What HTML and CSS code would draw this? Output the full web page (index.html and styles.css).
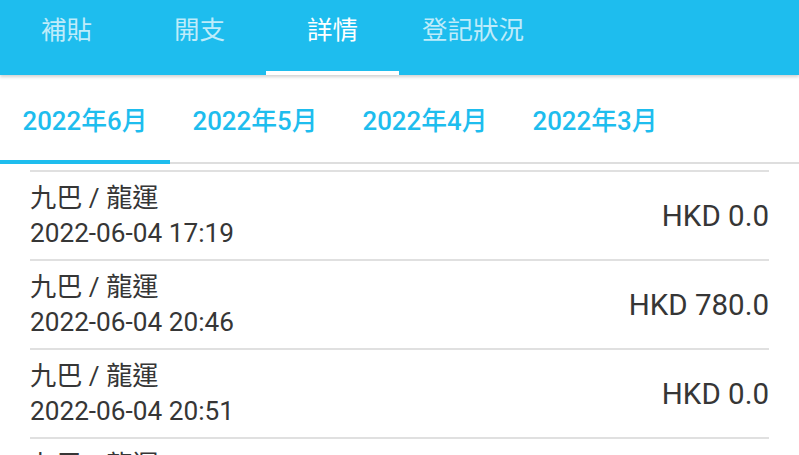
FILE: index.html
```html
<!DOCTYPE html>
<html lang="zh-Hant">
<head>
<meta charset="utf-8">
<link rel="stylesheet" href="styles.css">
</head>
<body>
<div class="app">
  <nav class="topbar">
    <div class="tab">補貼</div>
    <div class="tab">開支</div>
    <div class="tab active">詳情</div>
    <div class="tab wide">登記狀況</div>
  </nav>
  <nav class="months">
    <div class="month active">2022年6月</div>
    <div class="month">2022年5月</div>
    <div class="month">2022年4月</div>
    <div class="month">2022年3月</div>
  </nav>
  <ul class="list">
    <li class="row">
      <div class="info"><div class="title">九巴 / 龍運</div><div class="date">2022-06-04 17:19</div></div>
      <div class="amount">HKD 0.0</div>
    </li>
    <li class="row">
      <div class="info"><div class="title">九巴 / 龍運</div><div class="date">2022-06-04 20:46</div></div>
      <div class="amount">HKD 780.0</div>
    </li>
    <li class="row">
      <div class="info"><div class="title">九巴 / 龍運</div><div class="date">2022-06-04 20:51</div></div>
      <div class="amount">HKD 0.0</div>
    </li>
    <li class="row">
      <div class="info"><div class="title">九巴 / 龍運</div><div class="date">2022-06-04 21:02</div></div>
      <div class="amount">HKD 0.0</div>
    </li>
  </ul>
</div>
</body>
</html>
```
FILE: styles.css
```css
html, body {
  margin: 0;
  padding: 0;
  background: #ffffff;
  overflow: hidden;
}
body {
  width: 799px;
  height: 455px;
  font-family: Roboto, "Noto Sans CJK TC", "Noto Sans", sans-serif;
}
.app {
  display: flex;
  flex-direction: column;
  height: 455px;
  overflow: hidden;
}
.topbar {
  display: flex;
  height: 75px;
  background: #1ebdee;
  box-shadow: 0 2px 3px rgba(0, 0, 0, 0.18);
  position: relative;
  z-index: 2;
  flex: none;
}
.tab {
  box-sizing: border-box;
  min-width: 133px;
  padding: 12px 23px 0;
  text-align: center;
  font-size: 25.5px;
  line-height: 36px;
  color: rgba(255, 255, 255, 0.72);
  border-bottom: 4px solid transparent;
}
.tab.active {
  color: #ffffff;
  border-bottom-color: #ffffff;
}
.months {
  display: flex;
  height: 89px;
  border-bottom: 2px solid #dedede;
  box-sizing: border-box;
  flex: none;
}
.month {
  box-sizing: border-box;
  width: 170px;
  display: flex;
  align-items: center;
  justify-content: center;
  font-size: 25.8px;
  font-weight: 500;
  color: #1ebdee;
  border-bottom: 4px solid transparent;
  margin-bottom: -2px;
  padding-top: 2px;
}
.month.active {
  border-bottom-color: #1ebdee;
}
.list {
  list-style: none;
  margin: 6px 30px 0;
  padding: 0;
}
.row {
  display: flex;
  align-items: center;
  justify-content: space-between;
  box-sizing: border-box;
  height: 89px;
  border-top: 2px solid #e0e0e0;
  padding-top: 1px;
  color: #363636;
}
.title, .date {
  font-size: 26.2px;
  line-height: 35px;
}
.amount {
  font-size: 29.5px;
  line-height: 36px;
}
```
